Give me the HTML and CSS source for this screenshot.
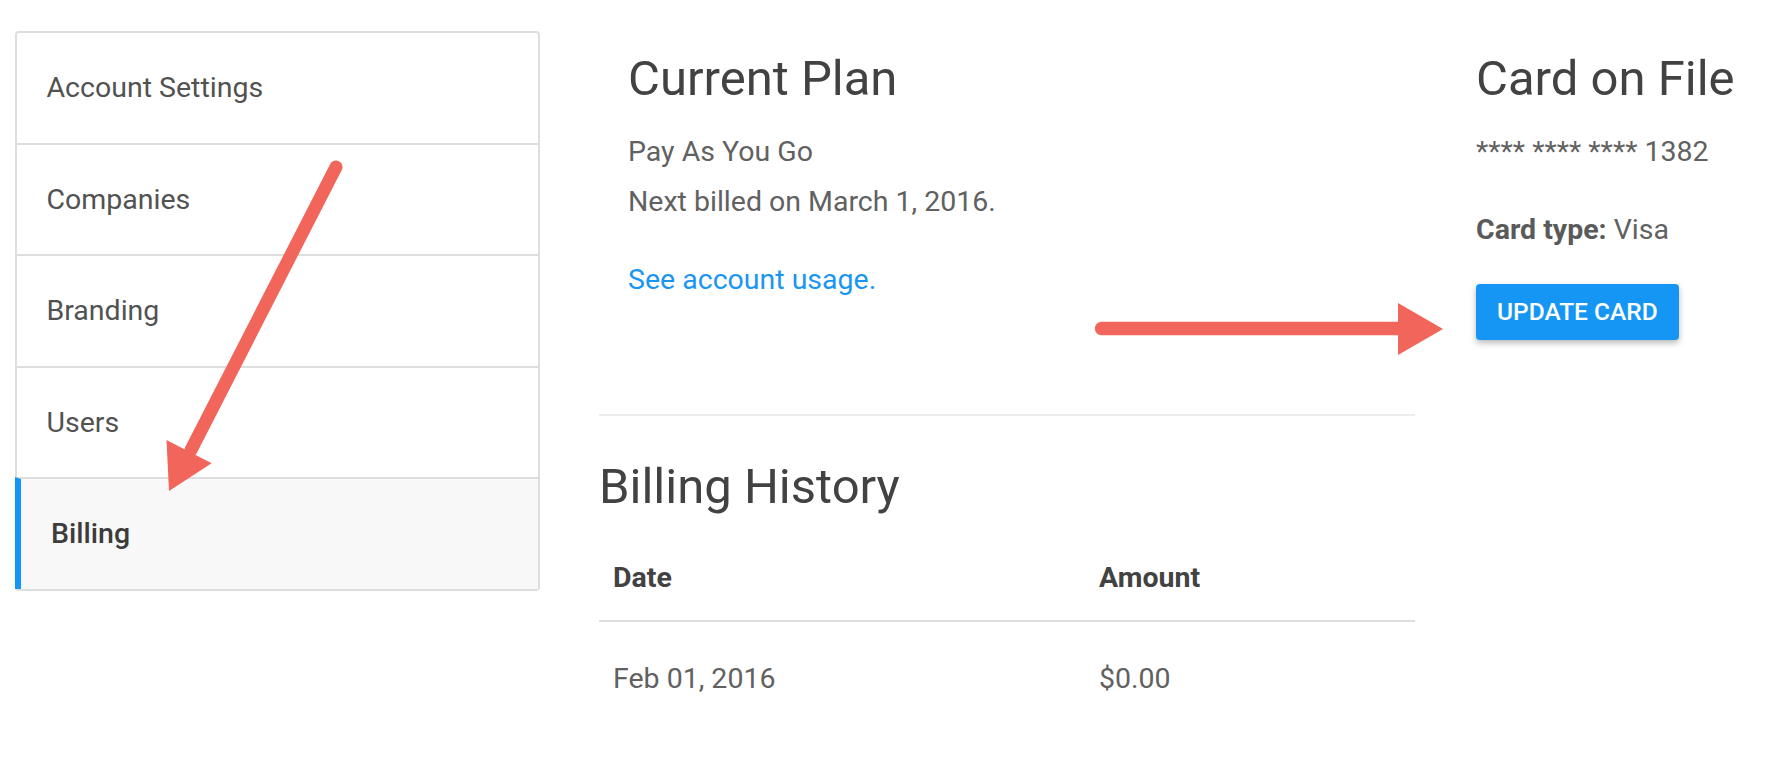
FILE: index.html
```html
<!DOCTYPE html>
<html>
<head>
<meta charset="utf-8">
<link rel="stylesheet" href="styles.css">
</head>
<body>
<div class="page">
  <nav class="sidenav">
    <div class="nav-item">Account Settings</div>
    <div class="nav-item">Companies</div>
    <div class="nav-item">Branding</div>
    <div class="nav-item">Users</div>
    <div class="nav-item active">Billing</div>
  </nav>
  <main class="main">
    <section class="plan">
      <h1 class="title">Current Plan</h1>
      <p class="text">Pay As You Go</p>
      <p class="text">Next billed on March 1, 2016.</p>
      <p class="text link-line"><a class="link" href="#">See account usage.</a></p>
    </section>
    <section class="history">
      <h2 class="title">Billing History</h2>
      <div class="table">
        <div class="th">Date</div>
        <div class="th">Amount</div>
        <div class="td">Feb 01, 2016</div>
        <div class="td">$0.00</div>
      </div>
    </section>
  </main>
  <aside class="card">
    <h1 class="title">Card on File</h1>
    <p class="text">**** **** **** 1382</p>
    <p class="text card-type"><strong class="label">Card type:</strong> Visa</p>
    <button class="btn">UPDATE CARD</button>
  </aside>
</div>
<svg class="arrows" width="1778" height="770" viewBox="0 0 1778 770">
  <line x1="336" y1="167" x2="191" y2="450" stroke="#f1655a" stroke-width="13" stroke-linecap="round"/>
  <polygon points="166.5,440 169,491 211.6,463.3" fill="#f1655a"/>
  <line x1="1101.5" y1="328.5" x2="1402" y2="328.5" stroke="#f1655a" stroke-width="13.3" stroke-linecap="round"/>
  <polygon points="1398,303 1443,329 1398,355" fill="#f1655a"/>
</svg>
</body>
</html>
```
FILE: styles.css
```css
html, body {
  margin: 0;
  padding: 0;
  background: #ffffff;
}
body {
  font-family: Roboto, "Liberation Sans", Arial, sans-serif;
  width: 1778px;
  height: 770px;
  overflow: hidden;
  position: relative;
}
.page {
  display: flex;
  align-items: flex-start;
  padding: 31px 0 0 14.5px;
}
.sidenav {
  width: 525px;
  box-sizing: border-box;
  border: 2px solid #dedede;
  border-radius: 4px;
  display: flex;
  flex-direction: column;
  flex-shrink: 0;
}
.nav-item {
  height: 109.5px;
  display: flex;
  align-items: center;
  padding-left: 30px;
  font-size: 28.5px;
  color: #525252;
  box-sizing: content-box;
}
.nav-item + .nav-item {
  border-top: 2px solid #dedede;
}
.nav-item.active {
  background: #f8f8f8;
  margin-left: -2px;
  border-left: 6px solid #1596f5;
  padding-left: 30.5px;
  font-weight: 500;
  color: #3c3c3c;
}
.main {
  margin-left: 59.5px;
  width: 816px;
  flex-shrink: 0;
}
.title {
  margin: 21px 0 26px;
  font-size: 49px;
  line-height: 54px;
  font-weight: 400;
  color: #424242;
}
.text {
  margin: 0 0 10px;
  font-size: 28.5px;
  line-height: 40px;
  color: #616161;
}
.plan {
  padding: 0 0 104.5px 29px;
  border-bottom: 2px solid #ececec;
}
.link-line {
  margin-top: 37.5px;
}
.link {
  color: #1996f3;
  text-decoration: none;
}
.history .title {
  margin: 44px 0 21.5px;
}
.table {
  display: grid;
  grid-template-columns: 486px 1fr;
}
.th {
  padding: 22px 14px 22.5px;
  font-size: 28.5px;
  line-height: 40px;
  font-weight: 700;
  color: #424242;
  border-bottom: 2px solid #dedede;
}
.td {
  padding: 36.5px 14px 30px;
  font-size: 28.5px;
  line-height: 40px;
  color: #616161;
}
.card {
  margin-left: 61px;
  width: 300px;
  flex-shrink: 0;
}
.card-type {
  margin-top: 38px;
}
.label {
  font-weight: 700;
  color: #5a5a5a;
}
.btn {
  margin-top: 24px;
  height: 56px;
  padding: 0 21px;
  border: none;
  border-radius: 4px;
  background: #1596f5;
  color: #ffffff;
  font-family: Roboto, "Liberation Sans", Arial, sans-serif;
  font-size: 24.5px;
  font-weight: 500;
  line-height: 56px;
  box-shadow: 0 3px 6px rgba(0, 0, 0, 0.28);
  cursor: pointer;
}
.arrows {
  position: absolute;
  top: 0;
  left: 0;
  pointer-events: none;
}
```
